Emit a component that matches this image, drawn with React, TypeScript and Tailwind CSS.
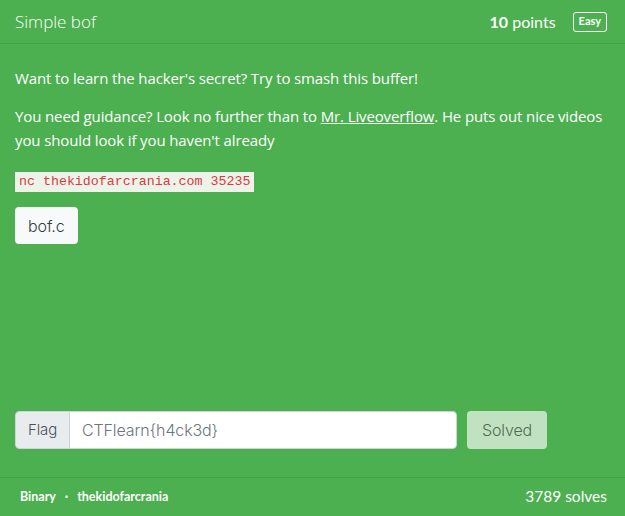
import React from 'react';

const body = { fontFamily: '"Open Sans", "Noto Sans", sans-serif' };
const mont = { fontFamily: 'Inter, "Noto Sans", sans-serif' };
const lato = { fontFamily: 'Lato, "Liberation Sans", sans-serif' };

const App: React.FC = () => {
  return (
    <div className="w-[625px] h-[516px] bg-[#4caf50] text-white flex flex-col overflow-hidden" style={body}>
      {/* ヘッダー */}
      <div className="h-[44px] flex items-center justify-between pl-[15px] pr-[18px] border-b border-[#43a047]">
        <div className="text-[17px] font-light">Simple bof</div>
        <div className="flex items-center">
          <span className="text-[16px] font-normal" style={lato}>
            <span className="font-bold">10</span> points
          </span>
          <span
            className="ml-[17px] border border-white rounded-[3px] px-[5px] h-[20px] flex items-center text-[11px] font-bold"
            style={lato}
          >
            Easy
          </span>
        </div>
      </div>

      {/* 本文 */}
      <div className="flex-1 flex flex-col px-[15px] pt-[22px] text-[15px] leading-[24px] tracking-[-0.12px]">
        <p>Want to learn the hacker's secret? Try to smash this buffer!</p>
        <p className="mt-[14px]">
          You need guidance? Look no further than to <a className="underline">Mr. Liveoverflow</a>. He puts out nice
          videos you should look if you haven't already
        </p>
        <div className="mt-[15px]">
          <code
            className="bg-[#eef3ea] text-[#d63c43] text-[13.3px] leading-[20px] px-[4px] py-0 inline-block tracking-normal"
            style={{ fontFamily: '"Liberation Mono", monospace' }}
          >
            nc thekidofarcrania.com 35235
          </code>
        </div>
        <div className="mt-[15px]">
          <button
            className="bg-[#f8f9fa] text-[#343a40] rounded-[4px] h-[37px] px-[13px] text-[16px] font-light"
            style={mont}
          >
            bof.c
          </button>
        </div>

        <div className="mt-auto mb-[28px] flex items-center">
          <div className="flex w-[442px] h-[38px] rounded-[4px] overflow-hidden border border-[#ced4da]" style={mont}>
            <div className="bg-[#e9ecef] text-[#495057] w-[54px] flex items-center justify-center border-r border-[#ced4da] text-[15px] font-light">
              Flag
            </div>
            <div className="flex-1 bg-white text-[#6c757d] flex items-center pl-[12px] text-[16px] font-light">
              CTFlearn{'{'}h4ck3d{'}'}
            </div>
          </div>
          <button
            className="ml-[10px] w-[80px] h-[38px] rounded-[4px] bg-[#c1e2c1] text-[#4f6b50] text-[16px] font-light"
            style={mont}
          >
            Solved
          </button>
        </div>
      </div>

      {/* フッター */}
      <div className="h-[39px] border-t border-[#43a047] flex items-center justify-between pl-[20px] pr-[18px]" style={lato}>
        <div className="text-[12.5px] font-bold">
          Binary <span className="mx-[6px]">·</span> thekidofarcrania
        </div>
        <div className="text-[15.5px]">3789 solves</div>
      </div>
    </div>
  );
};

export default App;
